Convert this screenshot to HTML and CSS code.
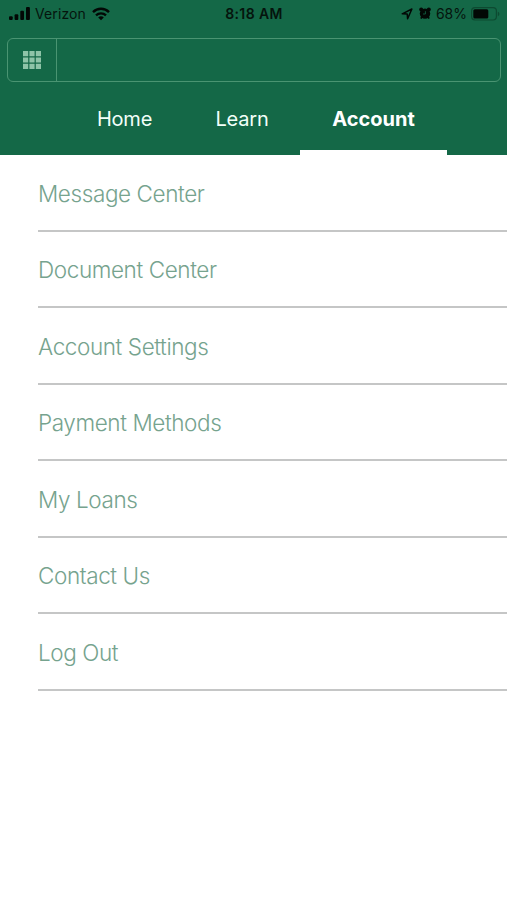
FILE: index.html
```
<!DOCTYPE html>
<html lang="en">
<head>
  <meta charset="utf-8">
  <meta name="viewport" content="width=device-width, initial-scale=1">
  <title>Account</title>
  <link rel="stylesheet" href="styles.css">
</head>
<body>
  <header class="header">
    <div class="status-bar">
      <div class="status-left">
        <svg class="signal" width="22" height="14" viewBox="0 0 22 14">
          <rect x="0" y="9.3" width="3.7" height="3.6" rx="1"/>
          <rect x="5.6" y="7.3" width="3.7" height="5.6" rx="1"/>
          <rect x="11.3" y="3.8" width="3.7" height="9.1" rx="1"/>
          <rect x="17" y="0" width="3.9" height="12.9" rx="1"/>
        </svg>
        <span class="carrier">Verizon</span>
        <svg class="wifi" width="18" height="14" viewBox="0 0 18 14">
          <path d="M1 5.1C5.4 .7 12.6 .7 17 5.1" fill="none" stroke="#020805" stroke-width="2.4"/>
          <path d="M4 8.3C6.8 5.6 11.2 5.6 14 8.3" fill="none" stroke="#020805" stroke-width="2.3"/>
          <path d="M9 13.2L6.2 10.4C7.8 9 10.2 9 11.8 10.4Z"/>
        </svg>
      </div>
      <span class="time">8:18 AM</span>
      <div class="status-right">
        <svg class="location" width="12" height="12" viewBox="0 0 12 12">
          <path d="M1.2 5.8L10.9 1L6.6 10.8L6.2 6Z" fill="none" stroke="#020805" stroke-width="1.5" stroke-linejoin="round"/>
        </svg>
        <svg class="alarm" width="12" height="13" viewBox="0 0 12 13">
          <circle cx="2.2" cy="2.4" r="2"/>
          <circle cx="9.8" cy="2.4" r="2"/>
          <circle cx="6" cy="6.6" r="5.2"/>
          <path d="M2.8 9.5L2 11.6M9.2 9.5L10 11.6" stroke="#020805" stroke-width="1.6"/>
          <path d="M6.4 4.2V7H4" fill="none" stroke="#146847" stroke-width=".8"/>
        </svg>
        <span class="percent">68%</span>
        <svg class="battery" width="29" height="14" viewBox="0 0 29 14">
          <rect x=".6" y=".6" width="24.8" height="12.4" rx="3.4" fill="none" stroke="#0d4a31" stroke-width="1.2"/>
          <rect x="2.3" y="2.2" width="15" height="9.2" rx="1.5"/>
          <path d="M26.8 4.8C28.9 5.5 28.9 8.5 26.8 9.2Z" fill="#0d4a31"/>
        </svg>
      </div>
    </div>

    <div class="search">
      <button class="search-menu" aria-label="Menu">
        <svg width="18" height="18" viewBox="0 0 18 18" fill="#8fc4a8">
          <path d="M0 0h5.2v5.2H0zM6.4 0h5.2v5.2H6.4zM12.8 0H18v5.2h-5.2zM0 6.4h5.2v5.2H0zM6.4 6.4h5.2v5.2H6.4zM12.8 6.4H18v5.2h-5.2zM0 12.8h5.2V18H0zM6.4 12.8h5.2V18H6.4zM12.8 12.8H18V18h-5.2z"/>
        </svg>
      </button>
      <input class="search-input" type="text" aria-label="Search">
    </div>

    <nav class="tabs">
      <a class="tab tab-home">Home</a>
      <a class="tab tab-learn">Learn</a>
      <a class="tab tab-account active">Account</a>
    </nav>
  </header>

  <ul class="menu">
    <li>Message Center</li>
    <li>Document Center</li>
    <li>Account Settings</li>
    <li>Payment Methods</li>
    <li>My Loans</li>
    <li>Contact Us</li>
    <li>Log Out</li>
  </ul>
</body>
</html>
```
FILE: styles.css
```
* {
  box-sizing: border-box;
}
body {
  margin: 0;
  min-height: 900px;
  background: #fff;
  font-family: Inter, "Liberation Sans", sans-serif;
}
svg {
  display: block;
  flex: none;
}

.header {
  display: flex;
  flex-direction: column;
  height: 155px;
  background: #146847;
}

/* status bar */
.status-bar {
  display: grid;
  grid-template-columns: 1fr auto 1fr;
  align-items: center;
  height: 27px;
  padding: 0 7px 0 9px;
  font-size: 14px;
  line-height: 27px;
  color: #05140d;
  fill: #020805;
}
.status-left,
.status-right {
  display: flex;
  align-items: center;
}
.status-right {
  justify-content: flex-end;
}
.carrier {
  margin: 0 6px 0 4px;
  letter-spacing: 0.1px;
}
.time {
  padding-right: 1px;
  font-weight: 600;
  letter-spacing: 0.4px;
}
.location {
  margin-right: 6px;
}
.alarm {
  margin-right: 5px;
}
.percent {
  margin-right: 4px;
}

/* search box */
.search {
  display: flex;
  height: 44px;
  margin: 11px 6px 0 7px;
  border: 1px solid #4a9472;
  border-radius: 6px;
}
.search-menu {
  display: flex;
  align-items: center;
  justify-content: center;
  width: 49px;
  padding: 0;
  border: none;
  border-right: 1px solid #4a9472;
  background: none;
}
.search-input {
  flex: 1;
  min-width: 0;
  border: none;
  background: none;
  outline: none;
}

/* tabs */
.tabs {
  display: flex;
  flex: 1;
  padding-left: 65px;
}
.tab {
  padding-top: 22px;
  border-bottom: 5px solid transparent;
  font-size: 20px;
  line-height: 30px;
  letter-spacing: -0.2px;
  text-align: center;
  color: #f2fff9;
}
.tab-home {
  width: 119px;
}
.tab-learn {
  width: 116px;
}
.tab-account {
  width: 147px;
}
.tab.active {
  border-bottom-color: #fff;
  font-weight: 700;
  letter-spacing: 0;
  color: #fff;
}

/* menu list */
.menu {
  margin: 0;
  padding: 0 0 0 38px;
  list-style: none;
}
.menu li {
  height: 76.5px;
  padding-top: 17.5px;
  border-bottom: 2px solid #c5c6c6;
  font-size: 22.5px;
  font-weight: 300;
  line-height: 42px;
  letter-spacing: -0.4px;
  color: #76a38e;
}
```
